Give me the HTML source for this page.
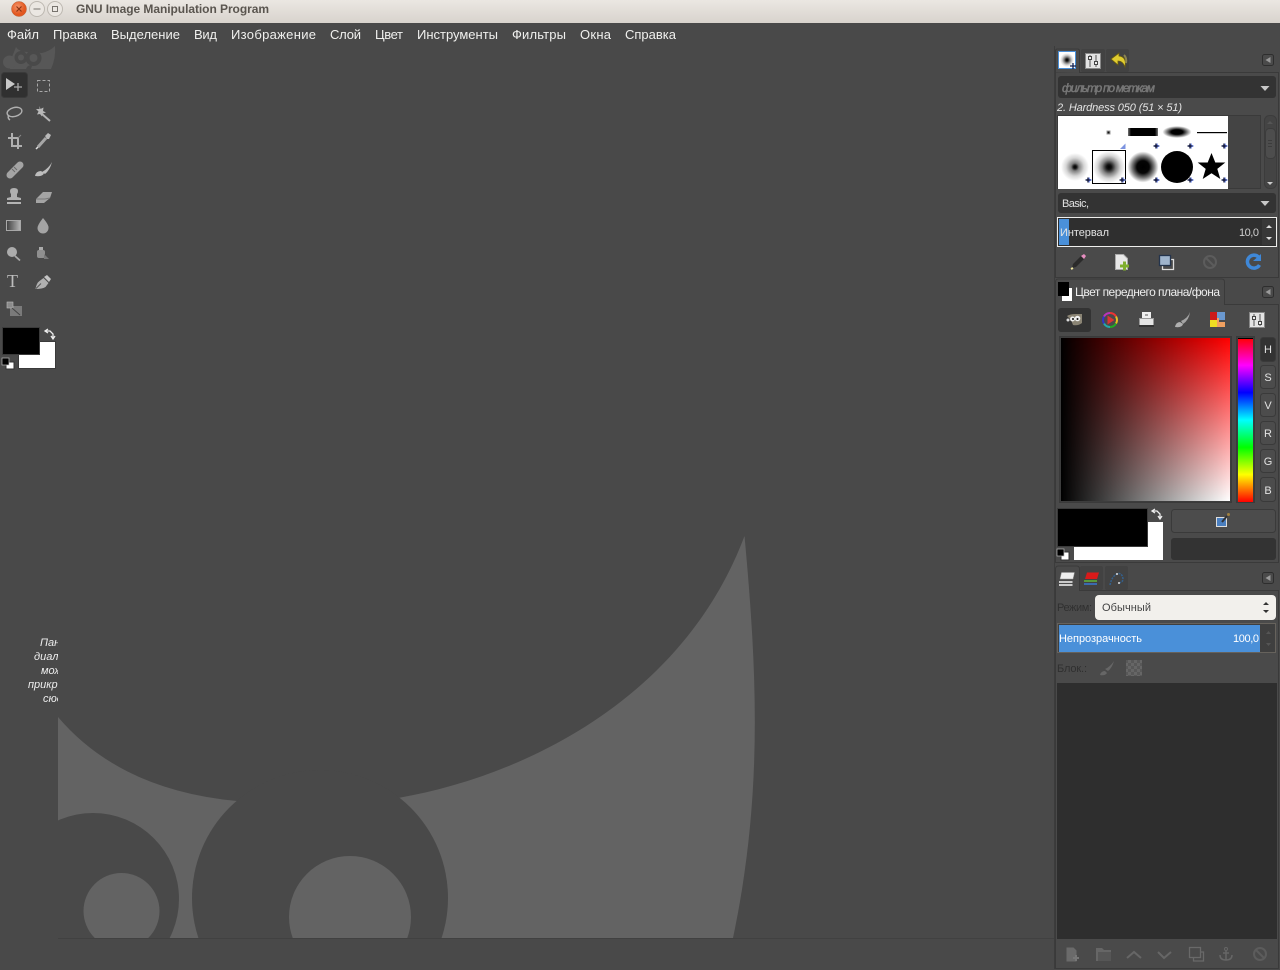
<!DOCTYPE html>
<html lang="ru"><head><meta charset="utf-8"><title>GNU Image Manipulation Program</title>
<style>
html,body{margin:0;padding:0;width:1280px;height:970px;overflow:hidden;background:#494949}
svg{display:block;position:absolute;left:0;top:0;overflow:hidden}
text{font-family:"Liberation Sans","DejaVu Sans",sans-serif;font-size:13px;fill:#eeeeec}
.m{font-size:13px;fill:#f0f0ee}
.s{font-size:11px;fill:#e2e2e2}
.d{font-size:11px;fill:#303030}
.i{font-size:11px;font-style:italic;fill:#e6e6e6}
.p{fill:#4a4a4a;stroke:#3a3a3a}
.b{fill:#4c4c4c;stroke:#3a3a3a}
.k{fill:none;stroke:#b0b0b0;stroke-width:1.400}
.g{fill:none;stroke:#666;stroke-width:2}
.db{fill:#4a4a4a;stroke:#2e2e2e}
.da{fill:#9a9a9a}
</style></head><body>
<svg width="1280" height="970" viewBox="0 0 1280 970" xmlns="http://www.w3.org/2000/svg">
<defs>
<linearGradient id="tb" x1="0" y1="0" x2="0" y2="1"><stop offset="0" stop-color="#ebe7e2"/><stop offset="1" stop-color="#d8d3cd"/></linearGradient>
<radialGradient id="cl" cx=".4" cy=".35"><stop offset="0" stop-color="#f5946a"/><stop offset="1" stop-color="#e2571f"/></radialGradient>
<linearGradient id="sv" x1="0" y1="0" x2="0" y2="1"><stop offset="0" stop-color="#f00"/><stop offset="1" stop-color="#fff"/></linearGradient>
<linearGradient id="bk" x1="0" y1="0" x2="1" y2="0"><stop offset="0" stop-color="#000"/><stop offset="1" stop-color="#000" stop-opacity="0"/></linearGradient>
<linearGradient id="hue" x1="0" y1="0" x2="0" y2="1"><stop offset="0" stop-color="#f00"/><stop offset=".167" stop-color="#f0f"/><stop offset=".333" stop-color="#00f"/><stop offset=".5" stop-color="#0ff"/><stop offset=".667" stop-color="#0f0"/><stop offset=".833" stop-color="#ff0"/><stop offset="1" stop-color="#f00"/></linearGradient>
<radialGradient id="s1"><stop offset="0" stop-color="#000"/><stop offset=".1" stop-color="#111"/><stop offset=".28" stop-color="#000" stop-opacity=".5"/><stop offset=".65" stop-color="#000" stop-opacity=".16"/><stop offset="1" stop-color="#000" stop-opacity="0"/></radialGradient>
<radialGradient id="s1b"><stop offset="0" stop-color="#000"/><stop offset=".15" stop-color="#111"/><stop offset=".42" stop-color="#000" stop-opacity=".5"/><stop offset=".72" stop-color="#000" stop-opacity=".16"/><stop offset="1" stop-color="#000" stop-opacity="0"/></radialGradient>
<radialGradient id="s2"><stop offset="0" stop-color="#000"/><stop offset=".4" stop-color="#050505"/><stop offset=".72" stop-color="#000" stop-opacity=".5"/><stop offset="1" stop-color="#000" stop-opacity="0"/></radialGradient>
<radialGradient id="s3"><stop offset="0" stop-color="#000"/><stop offset=".4" stop-color="#000"/><stop offset="1" stop-color="#000" stop-opacity="0"/></radialGradient>
<linearGradient id="rf" x1="0" y1="0" x2="1" y2="0"><stop offset="0" stop-color="#777"/><stop offset=".1" stop-color="#000"/><stop offset=".9" stop-color="#000"/><stop offset="1" stop-color="#777"/></linearGradient>
<linearGradient id="gr" x1="0" y1="0" x2="1" y2="0"><stop offset="0" stop-color="#3e3e3e"/><stop offset="1" stop-color="#b8b8b8"/></linearGradient>
<pattern id="chk" width="6" height="6" patternUnits="userSpaceOnUse"><rect width="6" height="6" fill="#585858"/><rect width="3" height="3" fill="#666"/><rect x="3" y="3" width="3" height="3" fill="#666"/></pattern>
<clipPath id="cv"><rect x="58" y="46" width="996" height="892"/></clipPath>
<clipPath id="tc"><rect x="0" y="630" width="58" height="80"/></clipPath>
<clipPath id="wb"><rect x="0" y="44" width="60" height="25"/></clipPath>
</defs>

<!-- canvas watermark -->
<g clip-path="url(#cv)">
<path d="M58 717Q120 790 237 801L398 798C530 775 685 695 744.500 536C758 680 762 800 733 938L58 938Z" fill="#636363"/>
<circle cx="93" cy="899" r="86" fill="#494949"/>
<circle cx="320" cy="898" r="128" fill="#494949"/>
<circle cx="121.500" cy="911" r="38" fill="#636363"/>
<circle cx="350" cy="917" r="61" fill="#636363"/>
</g>
<rect x="58" y="938" width="996" height="1" fill="#414141"/>

<!-- titlebar -->
<rect width="1280" height="23" fill="url(#tb)"/>
<circle cx="19" cy="9" r="7.500" fill="url(#cl)" stroke="#b8613a" stroke-width=".5"/>
<path d="M16.500 6.500l5 5m0-5l-5 5" stroke="#8a3414" stroke-width="1.200"/>
<circle cx="37" cy="9" r="7.500" fill="#ebe7e2" stroke="#bdb8b1"/>
<path d="M33.500 9h7" stroke="#77736e"/>
<circle cx="55" cy="9" r="7.500" fill="#ebe7e2" stroke="#bdb8b1"/>
<rect x="52.500" y="6.500" width="5" height="5" fill="none" stroke="#77736e"/>
<text x="76" y="13" textLength="193" style="font-size:12px;font-weight:bold;fill:#5a554f">GNU Image Manipulation Program</text>

<!-- menubar -->
<text class="m" x="7" y="39" textLength="32">Файл</text>
<text class="m" x="53" y="39" textLength="44">Правка</text>
<text class="m" x="111" y="39" textLength="69">Выделение</text>
<text class="m" x="194" y="39" textLength="23">Вид</text>
<text class="m" x="231" y="39" textLength="85">Изображение</text>
<text class="m" x="330" y="39" textLength="31">Слой</text>
<text class="m" x="375" y="39" textLength="28">Цвет</text>
<text class="m" x="417" y="39" textLength="81">Инструменты</text>
<text class="m" x="512" y="39" textLength="54">Фильтры</text>
<text class="m" x="580" y="39" textLength="31">Окна</text>
<text class="m" x="625" y="39" textLength="51">Справка</text>

<!-- toolbox wilber -->
<g clip-path="url(#wb)">
<path d="M16 47Q19 52 28 52L42 53Q50 51 55 46Q56 58 51 69H10V62Z" fill="#575757"/>
<circle cx="9.500" cy="62" r="6.500" fill="#575757"/>
<circle cx="21" cy="57.500" r="6.500" fill="#494949"/>
<circle cx="33.500" cy="58" r="8" fill="#494949"/>
<circle cx="21" cy="57.500" r="3" fill="#575757"/>
<circle cx="33.500" cy="58" r="4" fill="#575757"/>
<path d="M26 69q2-5 6-3l-1 3z" fill="#494949"/>
</g>

<!-- toolbox -->
<rect x="1.500" y="72.500" width="26" height="25" rx="3" fill="#303030" stroke="#3a3a3a"/>
<path d="M6 78v12l9-6z" fill="#c8c8c8"/><path d="M14 87h8m-4-4v8" stroke="#aaa" stroke-width="1.300"/>
<rect x="37.500" y="80.500" width="12" height="11" fill="none" stroke="#a8a8a8" stroke-dasharray="3 2"/>
<ellipse cx="14.500" cy="112" rx="7.500" ry="4.500" class="k" transform="rotate(-14 14.500 112)"/><path d="M9 115q-2 3 1 5" class="k"/>
<path d="M42 114l8 7" stroke="#b4b4b4" stroke-width="2"/><path d="M39.500 106l1 3 3-1.500-.5 3.500 3 1.500-3.500 1 -.5 3-2-2.500-3 .5 1.500-3-2.500-2.500 3.500 0z" fill="#b8b8b8"/>
<path d="M12 133v13h10M8 138h10v11" fill="none" stroke="#b0b0b0" stroke-width="2"/><path d="M18 138l3-3" stroke="#888"/>
<path d="M38 147l8-9" stroke="#a6a6a6" stroke-width="3"/><path d="M36 149l2-2" stroke="#e0e0e0" stroke-width="1.500"/><path d="M45 136l3-3 3 2-2 4-2 0z" fill="#b8b8b8"/>
<path d="M10 175l10-10" stroke="#a4a4a4" stroke-width="7" stroke-linecap="round"/><path d="M12 169l3 3m-1-5l3 3" stroke="#6a6a6a"/>
<path d="M42 172q7-4 10-10-2 8-7 12z" fill="#bdbdbd"/><path d="M35 176q1-5 6-5l3 2q-1 4-9 3z" fill="#bdbdbd"/>
<path d="M11 197v-3q-1-1-1-3 0-3 4-3t4 3q0 2-1 3v3l4 1v2H7v-2z" fill="#b0b0b0"/><rect x="7" y="202" width="14" height="2" fill="#b4b4b4"/>
<path d="M36 199l7-7h9l-2 6-6 5h-8z" fill="#a4a4a4"/><path d="M36 199h9l5-1" stroke="#777" fill="none"/>
<rect x="6.500" y="220.500" width="14" height="10" fill="url(#gr)" stroke="#a8a8a8"/>
<path d="M43 218q6 7 5.500 10a5.500 5.500 0 0 1-11 0q0-3 5.500-10z" fill="#a4a4a4"/>
<circle cx="12" cy="252" r="5" fill="#acacac"/><path d="M15 256l5 4.500" stroke="#a8a8a8" stroke-width="1.800"/>
<rect x="37" y="250" width="8" height="8" rx="2" fill="#8f8f8f"/><rect x="39" y="247" width="4" height="3" fill="#aaa"/><path d="M44 254l5 5h-5z" fill="#777"/>
<text x="7" y="287" textLength="13" style="font-family:'Liberation Serif',serif;font-size:18px;fill:#bdbdbd">T</text>
<path d="M35.500 289q1-6 4-8l4-3 5 5-3 4q-3 2-10 2z" fill="#b0b0b0"/><path d="M44 277l3-2 4 4-2 3z" fill="#c4c4c4"/><path d="M36 288.500l5-5" stroke="#555"/>
<rect x="10" y="306" width="12" height="10" fill="#7a7a7a"/><rect x="7" y="302" width="6" height="6" fill="#8a8a8a" stroke="#bbb" stroke-width=".6"/><path d="M12 308l8 7" stroke="#444"/>

<rect x="18.500" y="341.500" width="37" height="27" fill="#fff" stroke="#3a3a3a"/>
<rect x="2.500" y="327.500" width="37" height="27" fill="#000" stroke="#3a3a3a"/>
<path d="M46 331h4l3 3v4M48 329l-3 2 3 2M51 336l2 3 2-3" fill="none" stroke="#eee" stroke-width="1.300"/>
<rect x="6" y="362" width="8" height="7" fill="#fff" stroke="#333"/><rect x="2" y="358" width="7" height="7" fill="#000" stroke="#bbb" stroke-width=".7"/>

<g clip-path="url(#tc)">
<text class="i" x="40" y="646" style="fill:#eee">Панель</text>
<text class="i" x="34" y="660" style="fill:#eee">диалога</text>
<text class="i" x="41" y="674" style="fill:#eee">может</text>
<text class="i" x="28" y="688" style="fill:#eee">прикрепить</text>
<text class="i" x="43" y="702" style="fill:#eee">сюда</text>
</g>

<!-- dock -->
<rect x="1054" y="46" width="1" height="923" fill="#3c3c3c"/>

<!-- panel 1 -->
<rect x="1055.500" y="72.500" width="223" height="205" class="p"/>
<path d="M1055.500 72.500V51q0-2 2-2h20q2 0 2 2v22" fill="#4a4a4a" stroke="#3a3a3a"/>
<rect x="1081" y="49" width="24" height="23" rx="2" fill="#424242"/>
<rect x="1106" y="49" width="23" height="23" rx="2" fill="#424242"/>
<rect x="1058.500" y="51.500" width="17" height="17" fill="#fff" stroke="#4a90d9"/>
<circle cx="1067" cy="60" r="7" fill="url(#s1b)"/>
<path d="M1073 63v6m-3-3h6" stroke="#102050" stroke-width="1.300"/>
<rect x="1085.500" y="53.500" width="15" height="15" fill="#e4e4e4" stroke="#888"/>
<path d="M1090 55v12M1096 55v12" stroke="#555"/><rect x="1088.500" y="56.500" width="3" height="3" fill="#eee" stroke="#444"/><rect x="1094.500" y="61.500" width="3" height="3" fill="#eee" stroke="#444"/>
<path d="M1119 53l-8 6 7 6v-4q5 0 7 6 2-10-6-11z" fill="#e0cc30" stroke="#6a5c10" stroke-width=".8"/><path d="M1124 55q3 3 2 8" stroke="#8c8450" stroke-width="2" fill="none"/>
<rect x="1262.500" y="54.500" width="11" height="11" rx="2" class="db"/><path d="M1270.500 57v6l-5-3z" class="da"/>

<rect x="1058" y="76" width="218" height="22" rx="3" fill="#333"/>
<text x="1062" y="92" textLength="93" style="font-size:12px;font-style:italic;fill:#777;stroke:#777;stroke-width:.45">фильтр по меткам</text>
<path d="M1260.500 86h9l-4.500 5z" fill="#c8c8c8"/>
<text class="i" x="1057" y="111" textLength="125" style="fill:#e4e4e4">2. Hardness 050 (51 × 51)</text>

<!-- brushes -->
<rect x="1057.500" y="115.500" width="203" height="73" fill="#444" stroke="#3a3a3a"/>
<rect x="1058" y="116" width="170" height="73" fill="#fff"/>
<rect x="1106.500" y="130.500" width="4" height="4" fill="#999"/><rect x="1107.500" y="131.500" width="2" height="2" fill="#111"/>
<rect x="1128" y="128" width="30" height="8" fill="url(#rf)"/>
<ellipse cx="1177" cy="132" rx="14.500" ry="6" fill="url(#s3)"/>
<rect x="1197" y="132" width="30" height="1.200" fill="#000"/>
<circle cx="1075" cy="167" r="14" fill="url(#s1)"/>
<circle cx="1109" cy="167" r="16" fill="url(#s1b)"/>
<rect x="1092.500" y="150.500" width="33" height="33" fill="none" stroke="#000"/>
<circle cx="1143" cy="167" r="15.500" fill="url(#s2)"/>
<circle cx="1177" cy="167" r="16" fill="#000"/>
<path d="M1211.500 153l3.800 9.500h10l-8 6.400 3 10.100-8.800-5.800-8.800 5.800 3-10.100-8-6.400h10z" fill="#000"/>
<path d="M1120 149h5.500v-5.500z" fill="#7c93e0"/>
<path d="M1089 177.500v5m-2.500-2.500h5M1123 177.500v5m-2.500-2.500h5M1157 177.500v5m-2.500-2.500h5M1191 177.500v5m-2.500-2.500h5M1225 177.500v5m-2.500-2.500h5M1157 143.500v5m-2.500-2.500h5M1191 143.500v5m-2.500-2.500h5M1225 143.500v5m-2.500-2.500h5" stroke="#8fa4f5" stroke-width="2"/>
<path d="M1088 177.500v5m-2.500-2.500h5M1122 177.500v5m-2.500-2.500h5M1156 177.500v5m-2.500-2.500h5M1190 177.500v5m-2.500-2.500h5M1224 177.500v5m-2.500-2.500h5M1156 143.500v5m-2.500-2.500h5M1190 143.500v5m-2.500-2.500h5M1224 143.500v5m-2.500-2.500h5" stroke="#0a0f30" stroke-width="1.300"/>
<rect x="1264.500" y="115.500" width="12" height="73" rx="5" fill="#444" stroke="#3c3c3c"/>
<rect x="1265.500" y="128.500" width="10" height="30" rx="4" fill="#4d4d4d" stroke="#3c3c3c"/>
<path d="M1268 140.500h4M1268 143.500h4M1268 146.500h4" stroke="#3c3c3c"/>
<path d="M1267 182h6l-3 3z" fill="#ccc"/><path d="M1267 124l3-3 3 3z" fill="#555"/>

<rect x="1058" y="193" width="218" height="20" rx="3" fill="#333"/>
<text class="s" x="1062" y="207" textLength="27">Basic,</text>
<path d="M1260.500 201h9l-4.500 5z" fill="#c8c8c8"/>

<rect x="1057.500" y="217.500" width="219" height="29" fill="#2f2f2f" stroke="#eeeeec"/>
<rect x="1059" y="219" width="10" height="26" fill="#4a90d9"/>
<rect x="1262" y="219" width="14" height="26" fill="#383838"/>
<text class="s" x="1060" y="236" textLength="49">Интервал</text>
<text class="s" x="1239" y="236" textLength="20" style="fill:#cfcfcf">10,0</text>
<path d="M1266 228l3-3 3 3zM1266 237l3 3 3-3z" fill="#ddd"/>

<path d="M1072 268l1-4 8-8 3 3-8 8z" fill="#2a2a2a"/><path d="M1081 256l3-2 2 2-2 3z" fill="#e68ec0"/><path d="M1071 269l2-1" stroke="#f0e8a0" stroke-width="2"/>
<path d="M1115.500 254.500h8l4 4v11h-12z" fill="#e8e8e8" stroke="#aaa"/><path d="M1120 266h9m-4.500-4.500v9" stroke="#7fae2e" stroke-width="3"/>
<path d="M1170 259.500h3.500v10h-11v-3.500" fill="none" stroke="#ddd" stroke-width="1.300"/><rect x="1159.500" y="255.500" width="11" height="10" fill="#9fb4cc" stroke="#24344c" stroke-width="1.300"/>
<circle cx="1210" cy="262" r="6" fill="none" stroke="#5c5c5c" stroke-width="2"/><path d="M1206 258l8 8" stroke="#5c5c5c" stroke-width="2"/>
<path d="M1259.500 265a6.500 6.500 0 1 1-1-8" fill="none" stroke="#3f88d8" stroke-width="3.500"/><path d="M1253 261h8v-7z" fill="#3f88d8"/>

<!-- panel 2 -->
<rect x="1055.500" y="304.500" width="223" height="258" class="p"/>
<path d="M1055.500 305V282q0-3 3-3h163q3 0 3 3v22" fill="#4a4a4a" stroke="#3a3a3a"/>
<rect x="1058" y="304" width="166" height="2" fill="#4a4a4a"/>
<rect x="1062" y="288" width="10" height="13" fill="#fff"/>
<rect x="1058" y="282" width="11" height="14" fill="#000"/>
<text class="s" x="1075" y="296" textLength="145" style="font-size:12px;fill:#eee">Цвет переднего плана/фона</text>
<rect x="1262.500" y="286.500" width="11" height="11" rx="2" class="db"/><path d="M1270.500 289v6l-5-3z" class="da"/>

<rect x="1058" y="308" width="33" height="24" rx="3" fill="#333"/>
<path d="M1067 316q3-2 9-2h6v9q-4 3-9 2l-2-5z" fill="#8a8474"/><circle cx="1072.500" cy="319" r="2.500" fill="#eee"/><circle cx="1077.500" cy="318.500" r="2.800" fill="#eee"/><circle cx="1073" cy="319" r="1" fill="#111"/><circle cx="1077.500" cy="319" r="1" fill="#111"/><circle cx="1068" cy="320" r="1.500" fill="#ddd"/>
<g fill="none" stroke-width="2">
<path d="M1110 313a7 7 0 0 1 6 3.500" stroke="#e33"/><path d="M1116 316.500a7 7 0 0 1 0 7" stroke="#e8c020"/><path d="M1116 323.500a7 7 0 0 1-6 3.500" stroke="#2a2"/><path d="M1110 327a7 7 0 0 1-6-3.500" stroke="#2aa"/><path d="M1104 323.500a7 7 0 0 1 0-7" stroke="#33c"/><path d="M1104 316.500a7 7 0 0 1 6-3.500" stroke="#b3b"/>
</g><path d="M1107.500 315.500l7 4.500-7 4.500z" fill="#d33"/>
<rect x="1139.500" y="318.500" width="14" height="7" fill="#e4e4e4" stroke="#999"/><rect x="1142" y="312" width="9" height="6" fill="#eee"/><rect x="1139" y="325" width="15" height="2" fill="#333"/><path d="M1145 315h3" stroke="#555"/>
<path d="M1181 321q7-3 9-9-1 8-7 12z" fill="#a4a4a4"/><path d="M1175 327q1-5 5-5l3 2q-1 4-8 3z" fill="#b0b0b0"/>
<rect x="1210" y="312" width="8" height="8" fill="#cc1a1a"/><rect x="1217" y="312" width="8" height="8" fill="#6a98d0"/><rect x="1210" y="320" width="8" height="7" fill="#eedd22"/><path d="M1217 318h2v4h6v5h-8z" fill="#f0a060"/>
<rect x="1249.500" y="312.500" width="15" height="15" fill="#e4e4e4" stroke="#888"/><path d="M1254 314v12M1260 314v12" stroke="#555"/><rect x="1252.500" y="316.500" width="3" height="3" fill="#eee" stroke="#444"/><rect x="1258.500" y="321.500" width="3" height="3" fill="#eee" stroke="#444"/>

<rect x="1059.500" y="336.500" width="172" height="166" fill="#3d3d3d" stroke="#3a3a3a"/>
<rect x="1061" y="338" width="169" height="163" fill="url(#sv)"/>
<rect x="1061" y="338" width="169" height="163" fill="url(#bk)"/>
<rect x="1236.500" y="336.500" width="18" height="166" fill="#3d3d3d" stroke="#3a3a3a"/>
<rect x="1238" y="338" width="15" height="164" fill="url(#hue)"/>
<rect x="1238" y="338" width="15" height="1" fill="#000"/>
<rect x="1260.500" y="337.500" width="15" height="24" rx="3" fill="#333" stroke="#3a3a3a"/>
<rect x="1260.500" y="365.500" width="15" height="23" rx="3" class="b"/>
<rect x="1260.500" y="393.500" width="15" height="23" rx="3" class="b"/>
<rect x="1260.500" y="421.500" width="15" height="23" rx="3" class="b"/>
<rect x="1260.500" y="449.500" width="15" height="23" rx="3" class="b"/>
<rect x="1260.500" y="477.500" width="15" height="24" rx="3" class="b"/>
<g style="text-anchor:middle">
<text class="s" x="1268" y="353">H</text><text class="s" x="1268" y="381">S</text><text class="s" x="1268" y="409">V</text><text class="s" x="1268" y="437">R</text><text class="s" x="1268" y="465">G</text><text class="s" x="1268" y="494">B</text>
</g>

<rect x="1074" y="522" width="89" height="38" fill="#fff"/>
<rect x="1057.500" y="508.500" width="90" height="38" fill="#000" stroke="#3a3a3a"/>
<path d="M1153 511h4l3 3v4M1155 509l-3 2 3 2M1158 516l2 3 2-3" fill="none" stroke="#eee" stroke-width="1.300"/>
<rect x="1061" y="552" width="8" height="8" fill="#fff" stroke="#333"/><rect x="1057" y="549" width="7" height="7" fill="#000" stroke="#bbb" stroke-width=".7"/>
<rect x="1171.500" y="509.500" width="104" height="23" rx="3" class="b"/>
<rect x="1216.500" y="517.500" width="10" height="9" fill="#4a7fc0" stroke="#ddd"/><path d="M1222 522l5-6" stroke="#333" stroke-width="2"/><circle cx="1228.500" cy="514.500" r="1.500" fill="#a08040"/>
<rect x="1171" y="538" width="105" height="22" rx="3" fill="#333"/>

<!-- panel 3 -->
<rect x="1055.500" y="590.500" width="223" height="378" class="p"/>
<path d="M1055.500 591V569q0-3 3-3h18q3 0 3 3v22" fill="#4a4a4a" stroke="#3a3a3a"/>
<rect x="1057" y="590" width="22" height="2" fill="#4a4a4a"/>
<rect x="1080" y="566" width="23" height="24" rx="2" fill="#424242"/>
<rect x="1105" y="566" width="23" height="24" rx="2" fill="#424242"/>
<path d="M1060 579l1.500-6.500h13l-1.500 6.500z" fill="#eee" stroke="#999" stroke-width=".5"/><path d="M1059 582h13.500M1059 585h13.500" stroke="#ddd" stroke-width="1.700"/>
<path d="M1085 579l2-6.500h12l-2 6.500z" fill="#d91a1a"/><path d="M1084 581h13" stroke="#5a9a3a" stroke-width="2"/><path d="M1084 584h13" stroke="#3a6ab0" stroke-width="2"/>
<path d="M1110 585q2-9 7-11t6 5q0 3-4 4" fill="none" stroke="#34608c" stroke-width="1.500" stroke-dasharray="2 1"/><circle cx="1117" cy="574" r="1" fill="#ddd"/><circle cx="1119" cy="583" r="1" fill="#ddd"/>
<rect x="1262.500" y="572.500" width="11" height="11" rx="2" class="db"/><path d="M1270.500 575v6l-5-3z" class="da"/>

<text class="d" x="1057" y="611" textLength="35">Режим:</text>
<rect x="1095" y="595" width="181" height="25" rx="4" fill="#f2f0ec"/>
<text class="s" x="1102" y="611" textLength="49" style="fill:#444">Обычный</text>
<path d="M1263 605l3-3 3 3zM1263 610l3 3 3-3z" fill="#333"/>

<rect x="1057.500" y="623.500" width="218" height="29" fill="#3f3f3f" stroke="#66625c"/>
<rect x="1059" y="625" width="201" height="27" fill="#4a90d9"/>
<text class="s" x="1059" y="642" textLength="83" style="fill:#fff">Непрозрачность</text>
<text class="s" x="1233" y="642" textLength="26" style="fill:#fff">100,0</text>
<path d="M1266 634l2.500-3 2.500 3zM1266 643l2.500 3 2.500-3z" fill="#555"/>

<text class="d" x="1057" y="672" textLength="30">Блок.:</text>
<path d="M1105 669q5-2 9-8-2 7-6 10zM1100 675q1-4 5-4l2 2q-2 3-7 2z" fill="#666"/>
<rect x="1126" y="660" width="16" height="16" fill="url(#chk)"/>

<rect x="1057" y="683" width="220" height="256" fill="#2e2e2e"/>

<path d="M1066.500 947.500h7l3 3v11h-10z" fill="#6a6a6a"/><path d="M1073 958h6m-3-3v6" stroke="#777" stroke-width="2"/>
<path d="M1096 948h6l2 2h7v11h-15z" fill="#666"/><rect x="1098" y="952" width="13" height="9" fill="#565656"/>
<path d="M1127 958l7-6 7 6" class="g"/>
<path d="M1158 952l6 6 7-6" class="g"/>
<rect x="1189.500" y="947.500" width="11" height="10" fill="none" stroke="#696969" stroke-width="1.300"/><path d="M1200 952h3.500v9h-10v-3" fill="none" stroke="#696969" stroke-width="1.300"/>
<circle cx="1226" cy="949" r="1.500" fill="none" stroke="#666"/><path d="M1226 951v9m-6-5q0 5 6 5t6-5m-9-2h6" fill="none" stroke="#666" stroke-width="1.500"/>
<circle cx="1260" cy="954" r="6" fill="none" stroke="#5c5c5c" stroke-width="2"/><path d="M1256 950l8 8" stroke="#5c5c5c" stroke-width="2"/>
</svg>
</body></html>
